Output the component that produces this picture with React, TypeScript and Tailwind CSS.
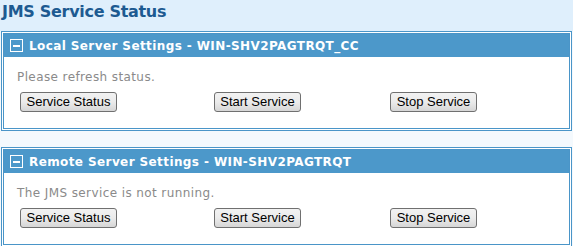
import React from 'react';

const Btn: React.FC<{ label: string; w: string }> = ({ label, w }) => (
  <button
    className={`${w} h-[20px] rounded-[3px] border border-[#707070] bg-gradient-to-b from-[#f2f2f2] via-[#ebebeb] to-[#d6d6d6] text-[13px] leading-none text-black font-['Liberation_Sans',Arial,sans-serif]`}
  >
    {label}
  </button>
);

const Panel: React.FC<{ title: string; message: string }> = ({ title, message }) => (
  <div className="mx-px border-[3px] border-double border-[#4a95c8] bg-white">
    <div className="flex h-[23px] items-center gap-[6px] bg-[#4c98ca] pl-[6px] text-[12px] font-bold tracking-[0.4px] text-white">
      <span className="flex h-[13px] w-[13px] items-center justify-center border border-white">
        <span className="h-[2px] w-[7px] bg-white"></span>
      </span>
      <span>{title}</span>
    </div>
    <div className="px-[13px] pt-[13px] pb-[15px]">
      <p className="text-[12px] leading-[15px] tracking-[0.4px] text-[#8a8a8a]">{message}</p>
      <div className="mt-[4px] grid grid-cols-[194px_176px_auto] pl-[3px]">
        <div><Btn label="Service Status" w="w-[97px]" /></div>
        <div><Btn label="Start Service" w="w-[87px]" /></div>
        <div><Btn label="Stop Service" w="w-[87px]" /></div>
      </div>
    </div>
  </div>
);

const App: React.FC = () => {
  return (
    <div className="h-[246px] w-[573px] bg-[#f4f9fd] font-['DejaVu_Sans',Verdana,sans-serif]">
      <div className="bg-[#dfeffc] pb-[8px]">
        <h1 className="pl-[2px] pt-[1px] text-[16px] font-bold leading-[22px] tracking-[-0.3px] text-[#1d5a91]">JMS Service Status</h1>
      </div>
      <Panel title="Local Server Settings - WIN-SHV2PAGTRQT_CC" message="Please refresh status." />
      <div className="h-[16px]"></div>
      <Panel title="Remote Server Settings - WIN-SHV2PAGTRQT" message="The JMS service is not running." />
    </div>
  );
};

export default App;
